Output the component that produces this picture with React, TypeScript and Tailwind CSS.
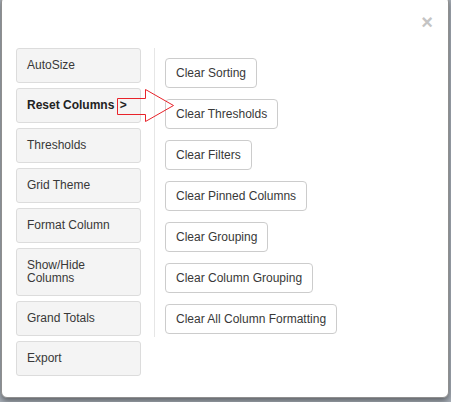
import React from 'react';

const MENU = ['AutoSize', 'Reset Columns', 'Thresholds', 'Grid Theme', 'Format Column', 'Show/Hide Columns', 'Grand Totals', 'Export'];

const ACTIONS = [
  'Clear Sorting',
  'Clear Thresholds',
  'Clear Filters',
  'Clear Pinned Columns',
  'Clear Grouping',
  'Clear Column Grouping',
  'Clear All Column Formatting',
];

const App: React.FC = () => {
  return (
    <div className="relative w-[451px] h-[402px] overflow-hidden bg-[#a9b0b9] font-['Liberation_Sans',Arial,sans-serif] text-[12px] text-[#383838]">
      <div className="ml-[1px] mt-[-4px] w-[448px] h-[402px] bg-white border border-[#8f8f8f] rounded-[6px] shadow-[0_3px_6px_rgba(0,0,0,0.45)] px-[14px]">
        <div className="h-[51px] flex justify-end items-start pt-[15px] pr-[1px]">
          <span className="text-[20px] leading-[20px] font-bold text-[#c4c4c4]">×</span>
        </div>
        <div className="flex items-start">
          <div className="w-[125px] flex flex-col gap-[5px]">
            {MENU.map((label) => (
              <div
                key={label}
                className={`flex items-center pl-[10px] pr-[6px] bg-[#f4f4f4] border border-[#dcdcdc] rounded-[3px] leading-[13px] ${
                  label === 'Show/Hide Columns' ? 'h-[48px]' : 'h-[35px]'
                } ${label === 'Reset Columns' ? 'font-bold text-[#222]' : ''}`}
              >
                {label === 'Show/Hide Columns' ? (
                  <span>
                    Show/Hide
                    <br />
                    Columns
                  </span>
                ) : label === 'Reset Columns' ? (
                  <span>
                    Reset Columns <span className="ml-[2px]">&gt;</span>
                  </span>
                ) : (
                  label
                )}
              </div>
            ))}
          </div>
          <div className="ml-[13px] border-l border-[#e6e6e6] pl-[10px] pt-[10px] pb-[3px] flex flex-col items-start gap-[11px]">
            {ACTIONS.map((label) => (
              <button
                key={label}
                className="h-[30px] px-[10px] bg-white border border-[#cccccc] rounded-[4px] text-[#383838] whitespace-nowrap"
              >
                {label}
              </button>
            ))}
          </div>
        </div>
      </div>
      <svg className="absolute left-[116px] top-[88px]" width="60" height="36" viewBox="0 0 60 36">
        <polygon
          points="1.5,10.5 29.5,10.5 29.5,1.5 57.5,17.5 29.5,33.5 29.5,26.5 1.5,26.5"
          fill="none"
          stroke="#e8232a"
          strokeWidth="1"
        />
      </svg>
    </div>
  );
};

export default App;
